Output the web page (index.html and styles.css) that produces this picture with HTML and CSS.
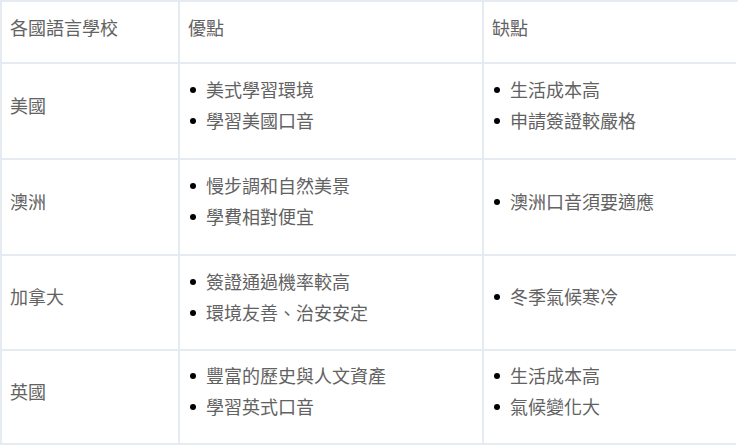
FILE: index.html
```html
<!DOCTYPE html>
<html lang="zh-Hant">
<head>
<meta charset="utf-8">
<link rel="stylesheet" href="styles.css">
</head>
<body>
<div class="table">
  <div class="cell head">各國語言學校</div>
  <div class="cell head">優點</div>
  <div class="cell head last">缺點</div>

  <div class="cell">美國</div>
  <div class="cell"><ul class="list"><li>美式學習環境</li><li>學習美國口音</li></ul></div>
  <div class="cell last"><ul class="list"><li>生活成本高</li><li>申請簽證較嚴格</li></ul></div>

  <div class="cell">澳洲</div>
  <div class="cell"><ul class="list"><li>慢步調和自然美景</li><li>學費相對便宜</li></ul></div>
  <div class="cell last"><ul class="list"><li>澳洲口音須要適應</li></ul></div>

  <div class="cell">加拿大</div>
  <div class="cell"><ul class="list"><li>簽證通過機率較高</li><li>環境友善、治安安定</li></ul></div>
  <div class="cell last"><ul class="list"><li>冬季氣候寒冷</li></ul></div>

  <div class="cell">英國</div>
  <div class="cell"><ul class="list"><li>豐富的歷史與人文資產</li><li>學習英式口音</li></ul></div>
  <div class="cell last"><ul class="list"><li>生活成本高</li><li>氣候變化大</li></ul></div>
</div>
</body>
</html>
```

FILE: styles.css
```css
html, body {
  margin: 0;
  padding: 0;
  background: #ffffff;
}

body {
  font-family: "Noto Sans CJK TC", "Noto Sans", sans-serif;
  font-size: 18px;
  color: #626262;
}

.table {
  display: grid;
  grid-template-columns: 178px 304px 252px;
  grid-template-rows: 62px 96px 96px 95px 94px;
  width: 736px;
  border-left: 2px solid #e6ebf1;
  border-top: 2px solid #e6ebf1;
}

.cell {
  border-right: 2px solid #e6ebf1;
  border-bottom: 2px solid #e6ebf1;
  padding: 0 8px 12px 8px;
  display: flex;
  flex-direction: column;
  justify-content: center;
  line-height: 31px;
}

.cell.last {
  border-right: none;
}

.cell.head {
  justify-content: flex-start;
  padding-top: 10px;
  padding-bottom: 0;
}

.list {
  margin: 0;
  padding: 0 0 0 18px;
  list-style: none;
}

.list li {
  position: relative;
}

.list li::before {
  content: "";
  position: absolute;
  left: -16px;
  top: 13px;
  width: 6px;
  height: 6px;
  border-radius: 50%;
  background: #000000;
}
```
